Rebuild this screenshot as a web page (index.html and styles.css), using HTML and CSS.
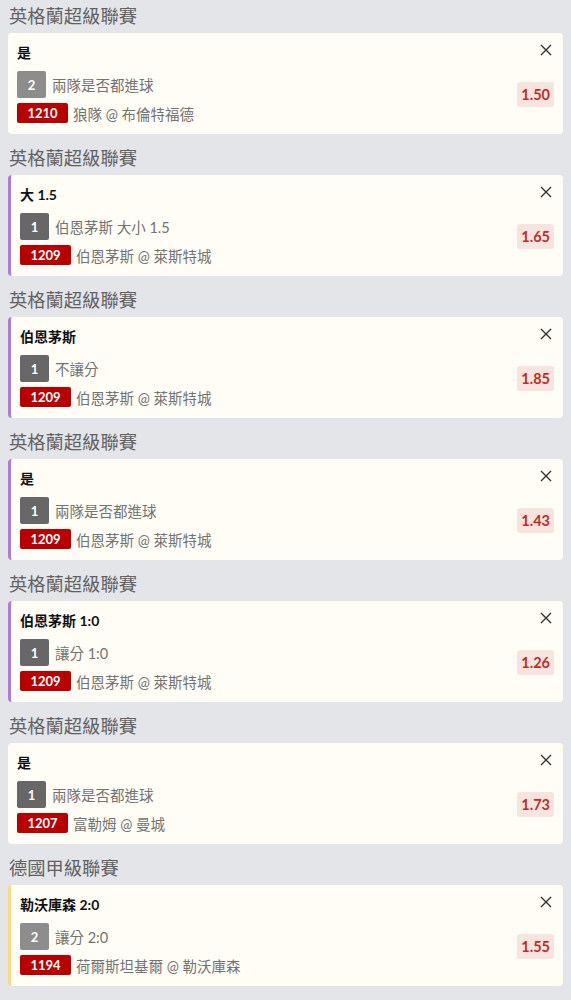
FILE: index.html
```html
<!DOCTYPE html>
<html lang="zh-Hant">
<head>
<meta charset="utf-8">
<link rel="stylesheet" href="styles.css">
</head>
<body>
<div class="list">
  <section class="sec">
    <h2 class="league">英格蘭超級聯賽</h2>
    <div class="card">
      <div class="main">
        <div class="title">是</div>
        <div class="row"><span class="num n2">2</span><span class="txt">兩隊是否都進球</span></div>
        <div class="row r2"><span class="code">1210</span><span class="txt">狼隊 @ 布倫特福德</span></div>
      </div>
      <div class="side">
        <svg class="x" viewBox="0 0 12 12"><path d="M1 1L11 11M11 1L1 11"/></svg>
        <span class="odds">1.50</span>
      </div>
    </div>
  </section>
  <section class="sec">
    <h2 class="league">英格蘭超級聯賽</h2>
    <div class="card purple">
      <div class="main">
        <div class="title">大 1.5</div>
        <div class="row"><span class="num n1">1</span><span class="txt">伯恩茅斯 大小 1.5</span></div>
        <div class="row r2"><span class="code">1209</span><span class="txt">伯恩茅斯 @ 萊斯特城</span></div>
      </div>
      <div class="side">
        <svg class="x" viewBox="0 0 12 12"><path d="M1 1L11 11M11 1L1 11"/></svg>
        <span class="odds">1.65</span>
      </div>
    </div>
  </section>
  <section class="sec">
    <h2 class="league">英格蘭超級聯賽</h2>
    <div class="card purple">
      <div class="main">
        <div class="title">伯恩茅斯</div>
        <div class="row"><span class="num n1">1</span><span class="txt">不讓分</span></div>
        <div class="row r2"><span class="code">1209</span><span class="txt">伯恩茅斯 @ 萊斯特城</span></div>
      </div>
      <div class="side">
        <svg class="x" viewBox="0 0 12 12"><path d="M1 1L11 11M11 1L1 11"/></svg>
        <span class="odds">1.85</span>
      </div>
    </div>
  </section>
  <section class="sec">
    <h2 class="league">英格蘭超級聯賽</h2>
    <div class="card purple">
      <div class="main">
        <div class="title">是</div>
        <div class="row"><span class="num n1">1</span><span class="txt">兩隊是否都進球</span></div>
        <div class="row r2"><span class="code">1209</span><span class="txt">伯恩茅斯 @ 萊斯特城</span></div>
      </div>
      <div class="side">
        <svg class="x" viewBox="0 0 12 12"><path d="M1 1L11 11M11 1L1 11"/></svg>
        <span class="odds">1.43</span>
      </div>
    </div>
  </section>
  <section class="sec">
    <h2 class="league">英格蘭超級聯賽</h2>
    <div class="card purple">
      <div class="main">
        <div class="title">伯恩茅斯 1:0</div>
        <div class="row"><span class="num n1">1</span><span class="txt">讓分 1:0</span></div>
        <div class="row r2"><span class="code">1209</span><span class="txt">伯恩茅斯 @ 萊斯特城</span></div>
      </div>
      <div class="side">
        <svg class="x" viewBox="0 0 12 12"><path d="M1 1L11 11M11 1L1 11"/></svg>
        <span class="odds">1.26</span>
      </div>
    </div>
  </section>
  <section class="sec">
    <h2 class="league">英格蘭超級聯賽</h2>
    <div class="card">
      <div class="main">
        <div class="title">是</div>
        <div class="row"><span class="num n1">1</span><span class="txt">兩隊是否都進球</span></div>
        <div class="row r2"><span class="code">1207</span><span class="txt">富勒姆 @ 曼城</span></div>
      </div>
      <div class="side">
        <svg class="x" viewBox="0 0 12 12"><path d="M1 1L11 11M11 1L1 11"/></svg>
        <span class="odds">1.73</span>
      </div>
    </div>
  </section>
  <section class="sec">
    <h2 class="league">德國甲級聯賽</h2>
    <div class="card yellow">
      <div class="main">
        <div class="title">勒沃庫森 2:0</div>
        <div class="row"><span class="num n2">2</span><span class="txt">讓分 2:0</span></div>
        <div class="row r2"><span class="code">1194</span><span class="txt">荷爾斯坦基爾 @ 勒沃庫森</span></div>
      </div>
      <div class="side">
        <svg class="x" viewBox="0 0 12 12"><path d="M1 1L11 11M11 1L1 11"/></svg>
        <span class="odds">1.55</span>
      </div>
    </div>
  </section>
</div>
</body>
</html>
```

FILE: styles.css
```css
* { box-sizing: border-box; }
html, body { margin: 0; padding: 0; }
body {
  background: #e4e5e9;
  font-family: Lato, "Noto Sans CJK TC", sans-serif;
  color: #222;
}
.list {
  display: flex;
  flex-direction: column;
  gap: 8px;
  padding: 0 8px;
}
.league {
  margin: 0;
  height: 33px;
  padding: 4px 0 0 1px;
  font-size: 18.3px;
  line-height: 24px;
  font-weight: 400;
  color: #626262;
}
.card {
  display: flex;
  height: 101px;
  background: #fffdf6;
  border-radius: 4px;
  padding: 10px 9px 11px 9px;
}
.card.purple { border-left: 3px solid #ab7ed3; }
.card.yellow { border-left: 3px solid #f6dc82; }
.main {
  flex: 1;
  display: flex;
  flex-direction: column;
}
.title {
  font-size: 14px;
  font-weight: 700;
  line-height: 20px;
  color: #111;
  margin-bottom: 8px;
}
.row {
  display: flex;
  align-items: center;
  height: 27px;
}
.row.r2 { height: 20px; margin-top: 5px; }
.num {
  width: 29px;
  height: 27px;
  border-radius: 2px;
  color: #fff;
  font-size: 13px;
  font-weight: 700;
  display: flex;
  align-items: center;
  justify-content: center;
}
.num.n1 { background: #676767; }
.num.n2 { background: #8d8d8d; }
.code {
  width: 51px;
  height: 20px;
  border-radius: 2px;
  background: #b80000;
  color: #fff;
  font-size: 13px;
  font-weight: 700;
  display: flex;
  align-items: center;
  justify-content: center;
}
.txt {
  margin-left: 6px;
  font-size: 14.5px;
  font-weight: 400;
  color: #737373;
  white-space: nowrap;
}
.r2 .txt { margin-left: 5px; }
.side {
  display: flex;
  flex-direction: column;
  align-items: flex-end;
}
.x {
  width: 12px;
  height: 12px;
  margin-top: 1px;
  margin-right: 2px;
}
.x path { stroke: #333; stroke-width: 1.4; fill: none; }
.odds {
  margin-top: 26px;
  height: 25px;
  padding: 0 4px;
  border-radius: 3px;
  background: #f7e4df;
  color: #b8302c;
  font-size: 14.5px;
  font-weight: 700;
  line-height: 25px;
}
```
